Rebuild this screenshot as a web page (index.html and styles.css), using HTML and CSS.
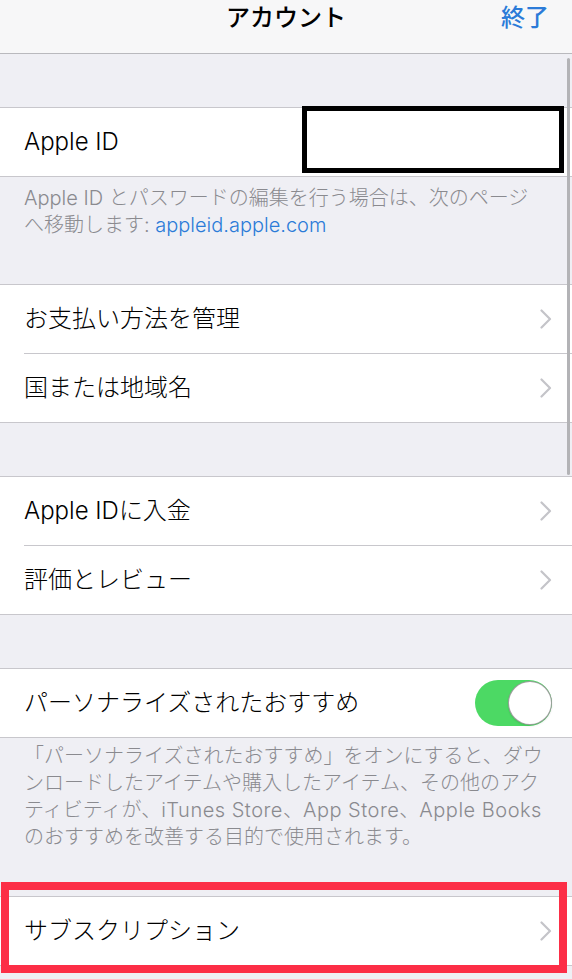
FILE: index.html
```html
<!DOCTYPE html>
<html lang="ja">
<head>
<meta charset="utf-8">
<title>アカウント</title>
<link rel="stylesheet" href="styles.css">
</head>
<body>
<div class="screen">
  <header class="navbar">
    <div class="nav-side"></div>
    <div class="nav-title">アカウント</div>
    <div class="nav-side nav-done">終了</div>
  </header>

  <main class="content">
    <div class="spacer"></div>

    <section class="group">
      <div class="row"><span class="label">Apple ID</span></div>
    </section>
    <p class="footnote footnote-first">Apple ID とパスワードの編集を行う場合は、次のページ<br>へ移動します: <span class="link">appleid.apple.com</span></p>

    <section class="group">
      <div class="row"><span class="label">お支払い方法を管理</span><svg class="chevron" viewBox="0 0 12 20" width="12" height="20"><path d="M1.5 1.5 L10 10 L1.5 18.5"/></svg></div>
      <div class="row"><span class="label">国または地域名</span><svg class="chevron" viewBox="0 0 12 20" width="12" height="20"><path d="M1.5 1.5 L10 10 L1.5 18.5"/></svg></div>
    </section>

    <div class="spacer"></div>

    <section class="group">
      <div class="row"><span class="label">Apple IDに入金</span><svg class="chevron" viewBox="0 0 12 20" width="12" height="20"><path d="M1.5 1.5 L10 10 L1.5 18.5"/></svg></div>
      <div class="row"><span class="label">評価とレビュー</span><svg class="chevron" viewBox="0 0 12 20" width="12" height="20"><path d="M1.5 1.5 L10 10 L1.5 18.5"/></svg></div>
    </section>

    <div class="spacer"></div>

    <section class="group">
      <div class="row"><span class="label">パーソナライズされたおすすめ</span><span class="toggle"></span></div>
    </section>
    <p class="footnote footnote-second">「パーソナライズされたおすすめ」をオンにすると、ダウ<br>ンロードしたアイテムや購入したアイテム、その他のアク<br>ティビティが、<span class="wide">iTunes Store</span>、<span class="wide">App Store</span>、<span class="wide">Apple Books</span><br>のおすすめを改善する目的で使用されます。</p>

    <section class="group">
      <div class="row"><span class="label">サブスクリプション</span><svg class="chevron" viewBox="0 0 12 20" width="12" height="20"><path d="M1.5 1.5 L10 10 L1.5 18.5"/></svg></div>
    </section>
  </main>

  <div class="scroll-indicator"></div>
  <div class="redact-box"></div>
  <div class="highlight-box"></div>
</div>
</body>
</html>
```

FILE: styles.css
```css
html, body {
  margin: 0;
  padding: 0;
}

body {
  background: #efeff4;
  font-family: "Inter", "Noto Sans CJK JP", sans-serif;
  color: #000;
}

.screen {
  position: relative;
  width: 572px;
  height: 979px;
  overflow: hidden;
  background: #efeff4;
}

.navbar {
  height: 53px;
  display: grid;
  grid-template-columns: 1fr auto 1fr;
  align-items: start;
  background: #f7f7f8;
  border-bottom: 1px solid #b9b9bd;
}

.nav-title {
  font-size: 24px;
  line-height: 36px;
  font-weight: 500;
  color: #000;
}

.nav-done {
  text-align: right;
  padding-right: 23px;
  font-size: 24px;
  line-height: 36px;
  font-weight: 500;
  color: #2b7bd8;
}

.content {
  display: flex;
  flex-direction: column;
}

.spacer {
  height: 53px;
}

.group {
  background: #fff;
  border-top: 1px solid #c8c7cc;
  border-bottom: 1px solid #c8c7cc;
}

.row {
  height: 68px;
  margin-left: 24px;
  padding-right: 20px;
  display: flex;
  align-items: center;
  justify-content: space-between;
}

.row + .row {
  border-top: 1px solid #c8c7cc;
}

.label {
  font-size: 24px;
  line-height: 30px;
  font-weight: 300;
  color: #000;
  white-space: nowrap;
}

.chevron {
  flex: none;
  fill: none;
  stroke: #c4c4c9;
  stroke-width: 2.2;
  stroke-linecap: round;
  stroke-linejoin: round;
}

.toggle {
  flex: none;
  position: relative;
  width: 77px;
  height: 46px;
  border-radius: 23px;
  background: #4cd964;
}

.toggle::after {
  content: "";
  position: absolute;
  top: 1px;
  right: 0;
  width: 44px;
  height: 44px;
  box-sizing: border-box;
  border-radius: 50%;
  background: #fff;
  border: 1px solid rgba(0, 0, 0, 0.38);
  box-shadow: 0 1px 2px rgba(0, 0, 0, 0.12);
}

.footnote {
  margin: 0;
  padding: 0 12px 45px 24px;
  font-size: 20px;
  line-height: 27px;
  font-weight: 300;
  color: #8a8a8f;
  white-space: nowrap;
}

.footnote-first {
  padding-top: 8px;
}

.footnote-second {
  padding-top: 5px;
}

.wide {
  letter-spacing: 0.5px;
}

.link {
  color: #2b7bd8;
}

.scroll-indicator {
  position: absolute;
  left: 567px;
  top: 58px;
  width: 3px;
  height: 417px;
  border-radius: 2px;
  background: #b3b3b6;
}

.redact-box {
  position: absolute;
  left: 302px;
  top: 106px;
  width: 262px;
  height: 67px;
  box-sizing: border-box;
  border: 5px solid #000;
  background: #fff;
}

.highlight-box {
  position: absolute;
  left: 1px;
  top: 882px;
  width: 566px;
  height: 91px;
  box-sizing: border-box;
  border: 8px solid #fc2e46;
}
```
